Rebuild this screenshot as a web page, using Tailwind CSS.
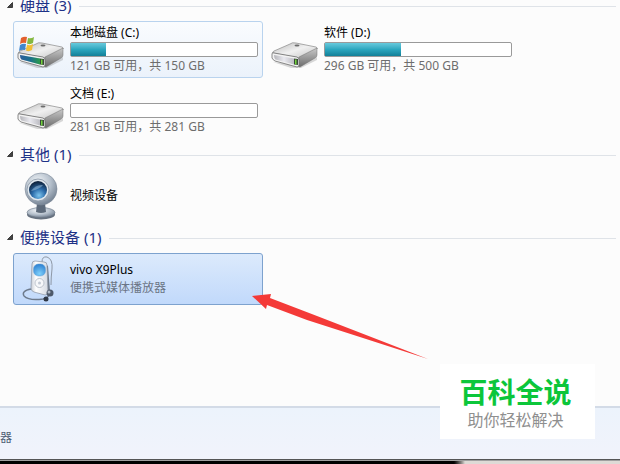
<!DOCTYPE html>
<html lang="zh-CN">
<head>
    <meta charset="UTF-8">
    <meta name="viewport" content="width=device-width, initial-scale=1.0">
    <script src="https://cdn.jsdelivr.net/npm/@tailwindcss/browser@4"></script>
    <title>计算机</title>
</head>
<body class="relative flex h-screen flex-col overflow-hidden bg-[#fcfcfc] font-['Noto_Sans','Noto_Sans_CJK_SC',sans-serif] text-[12px] leading-4 text-black">
    <!-- shared drawings -->
    <svg class="absolute size-0" aria-hidden="true">
        <defs>
            <linearGradient id="metalTop" x1="0" y1="0" x2="1" y2="1">
                <stop offset="0" stop-color="#b9b9b9"/>
                <stop offset=".5" stop-color="#f0f0f0"/>
                <stop offset="1" stop-color="#c4c4c4"/>
            </linearGradient>
            <linearGradient id="metalSide" x1="0" y1="0" x2="0" y2="1">
                <stop offset="0" stop-color="#c9c9c9"/>
                <stop offset="1" stop-color="#6c6c6c"/>
            </linearGradient>
            <linearGradient id="metalFront" x1="0" y1="0" x2="1" y2="0">
                <stop offset="0" stop-color="#b5b5ba"/>
                <stop offset=".5" stop-color="#e9e9ef"/>
                <stop offset="1" stop-color="#bcbcc2"/>
            </linearGradient>
            <linearGradient id="systemFront" x1="0" y1="0" x2="1" y2="0">
                <stop offset="0" stop-color="#2c5f9c"/>
                <stop offset=".5" stop-color="#1c6f8f"/>
                <stop offset="1" stop-color="#2b9a4e"/>
            </linearGradient>
            <radialGradient id="camBody" cx=".4" cy=".3" r=".75">
                <stop offset="0" stop-color="#f3f6f9"/>
                <stop offset=".55" stop-color="#b4bfcb"/>
                <stop offset="1" stop-color="#6d7b8c"/>
            </radialGradient>
            <radialGradient id="camLens" cx=".55" cy=".8" r=".75">
                <stop offset="0" stop-color="#7cc4ee"/>
                <stop offset=".5" stop-color="#2a6aa8"/>
                <stop offset="1" stop-color="#10243f"/>
            </radialGradient>
            <linearGradient id="playerBody" x1="0" y1="0" x2="1" y2="0">
                <stop offset="0" stop-color="#c9ced6"/>
                <stop offset=".3" stop-color="#ffffff"/>
                <stop offset="1" stop-color="#d5dae2"/>
            </linearGradient>
            <radialGradient id="playerScreen" cx=".5" cy=".8" r=".8">
                <stop offset="0" stop-color="#7fd0fb"/>
                <stop offset="1" stop-color="#2c7fd0"/>
            </radialGradient>
            <g id="driveShape">
                <path d="M2 24 26 32 46 22 V19 L28 27z" fill="#000" opacity=".15"/>
                <path d="M2 15 Q1 14 3 13 L19 6 Q21 4 25 5 L45 9 Q47 10 46 11 L28 20z" fill="url(#metalTop)" stroke="#8a8a8a" stroke-width=".7"/>
                <path d="M28 19 46 10 V17 Q46 19 44 20 L29 29 Q27 29 27 27z" fill="url(#metalSide)" stroke="#707070" stroke-width=".5"/>
                <path d="M1 16 Q1 14 3 15 L26 19 Q28 20 28 22 V27 Q28 29 26 29 L4 23 Q2 22 1 20z" fill="#f2f2f2" stroke="#6d6d6d" stroke-width=".8"/>
                <path d="M3 17 23 20.5 V26.5 L4.500 21.500 Q3 20 3 17z" fill="url(#metalFront)"/>
                <path d="M23 20.500 27 21 V27 L23 26.500z" fill="#3a4a3a"/>
                <path d="M24 21.500h1.500v5H24z" fill="#72d43c"/>
                <ellipse cx="26" cy="7.500" rx="2.500" ry="1" fill="#6c6c6c"/>
            </g>
        </defs>
    </svg>

    <main class="min-h-0 flex-1 overflow-hidden pr-1">
        <div class="-mt-[10px]">
            <section class="pt-1">
                <h2 class="flex h-6 items-center text-[15px] text-[#1e3287]">
                    <button type="button" class="flex items-center gap-[6px] pb-[2px] pl-[6px]">
                        <svg class="size-2" viewBox="0 0 8 8" aria-hidden="true"><path d="M6.500 1.500v5h-5z" fill="#444" stroke="#222" stroke-width=".8"/></svg>
                        <span>硬盘 (3)</span>
                    </button>
                    <span class="ml-2 h-px flex-1 bg-[#dfe3e8]"></span>
                </h2>
                <div class="mt-[3px] flex flex-wrap gap-1 pl-[13px]">
                    <button type="button" class="flex h-[57px] w-[250px] items-center gap-[5px] rounded-[3px] border border-[#b9d3ee] bg-linear-to-b from-[#fafcfe] to-[#ebf2fb] pr-1 pl-[3px] text-left">
                        <svg class="h-9 w-12 shrink-0" viewBox="0 0 48 36" aria-hidden="true">
                            <use href="#driveShape" y="6"/>
                            <path d="M3 23 23 26.500 V32.500 L4.500 27.500 Q3 26 3 23z" fill="url(#systemFront)"/>
                            <path d="M4 6 Q7 4 10 5 L9 11 Q6 10 3 12z" fill="#e2602e"/>
                            <path d="M11 6 Q14 7 17 5 L16 11 Q13 13 10 11.500z" fill="#84b840"/>
                            <path d="M3 13 Q6 11 9 12 L8 18 Q5 17 2 19z" fill="#3f86cf"/>
                            <path d="M10 12.500 Q13 14 16 12 L15 18 Q12 20 9 18.500z" fill="#f2bf35"/>
                        </svg>
                        <span class="flex min-w-0 flex-1 flex-col gap-px">
                            <span>本地磁盘 (C:)</span>
                            <span class="flex h-[15px] rounded-[2px] border border-[#9a9a9a] bg-white"><span class="bg-linear-to-b from-[#66cadd] via-[#2ba6be] via-50% to-[#128098]" style="width: 19%"></span></span>
                            <span class="text-[#6d6d6d]">121 GB 可用，共 150 GB</span>
                        </span>
                    </button>
                    <button type="button" class="flex h-[57px] w-[250px] items-center gap-[5px] rounded-[3px] border border-transparent pr-1 pl-[3px] text-left">
                        <svg class="h-9 w-12 shrink-0" viewBox="0 0 48 36" aria-hidden="true"><use href="#driveShape" y="6"/></svg>
                        <span class="flex min-w-0 flex-1 flex-col gap-px">
                            <span>软件 (D:)</span>
                            <span class="flex h-[15px] rounded-[2px] border border-[#9a9a9a] bg-white"><span class="bg-linear-to-b from-[#66cadd] via-[#2ba6be] via-50% to-[#128098]" style="width: 41%"></span></span>
                            <span class="text-[#6d6d6d]">296 GB 可用，共 500 GB</span>
                        </span>
                    </button>
                    <button type="button" class="flex h-[57px] w-[250px] items-center gap-[5px] rounded-[3px] border border-transparent pr-1 pl-[3px] text-left">
                        <svg class="h-9 w-12 shrink-0" viewBox="0 0 48 36" aria-hidden="true"><use href="#driveShape" y="6"/></svg>
                        <span class="flex min-w-0 flex-1 flex-col gap-px">
                            <span>文档 (E:)</span>
                            <span class="flex h-[15px] rounded-[2px] border border-[#9a9a9a] bg-white"></span>
                            <span class="text-[#6d6d6d]">281 GB 可用，共 281 GB</span>
                        </span>
                    </button>
                </div>
            </section>

            <section class="pt-1">
                <h2 class="flex h-6 items-center text-[15px] text-[#1e3287]">
                    <button type="button" class="flex items-center gap-[6px] pb-[2px] pl-[6px]">
                        <svg class="size-2" viewBox="0 0 8 8" aria-hidden="true"><path d="M6.500 1.500v5h-5z" fill="#444" stroke="#222" stroke-width=".8"/></svg>
                        <span>其他 (1)</span>
                    </button>
                    <span class="ml-2 h-px flex-1 bg-[#dfe3e8]"></span>
                </h2>
                <div class="mt-[3px] flex flex-wrap gap-1 pl-[13px]">
                    <button type="button" class="flex h-[52px] w-[250px] items-center gap-[5px] rounded-[3px] border border-transparent pr-1 pl-[3px] text-left">
                        <svg class="size-12 shrink-0" viewBox="0 0 48 48" aria-hidden="true">
                            <ellipse cx="24" cy="42.500" rx="14" ry="5" fill="#66717f"/>
                            <ellipse cx="24" cy="40.500" rx="14" ry="5" fill="url(#camBody)" stroke="#6f7b89" stroke-width=".6"/>
                            <path d="M20 31h8l1 9q-5 2-10 0z" fill="#5d6a7a"/>
                            <circle cx="24" cy="17" r="16" fill="url(#camBody)" stroke="#7d8a99" stroke-width=".6"/>
                            <circle cx="21" cy="18" r="11" fill="#dfe6ed" stroke="#8794a3" stroke-width=".8"/>
                            <circle cx="21" cy="18" r="9" fill="url(#camLens)"/>
                            <path d="M14 19 Q19 12 26 13 Q23 17 14 19z" fill="#c7e0f2" opacity=".4"/>
                        </svg>
                        <span>视频设备</span>
                    </button>
                </div>
            </section>

            <section class="pt-1">
                <h2 class="flex h-6 items-center text-[15px] text-[#1e3287]">
                    <button type="button" class="flex items-center gap-[6px] pb-[2px] pl-[6px]">
                        <svg class="size-2" viewBox="0 0 8 8" aria-hidden="true"><path d="M6.500 1.500v5h-5z" fill="#444" stroke="#222" stroke-width=".8"/></svg>
                        <span>便携设备 (1)</span>
                    </button>
                    <span class="ml-2 h-px flex-1 bg-[#dfe3e8]"></span>
                </h2>
                <div class="mt-[3px] flex flex-wrap gap-1 pl-[13px]">
                    <button type="button" class="flex h-[52px] w-[250px] items-center gap-[5px] rounded-[3px] border border-[#7da2ce] bg-linear-to-b from-[#dceafc] to-[#c1d9fb] pr-1 pl-[3px] text-left">
                        <svg class="size-12 shrink-0" viewBox="0 0 48 48" aria-hidden="true">
                            <path d="M25 7 Q25 1 30 2 Q36 4 35 14 Q34 22 34 30" fill="none" stroke="#8e98a6" stroke-width="1"/>
                            <path d="M14 34 Q4 36 7 41 Q12 46 26 44 Q31 43 32 40" fill="none" stroke="#6d7a8c" stroke-width="1.400"/>
                            <path d="M28 9 31 11 33 36 29 39z" fill="#6f7a89"/>
                            <path d="M15 9 Q15 6 18 6 L27 7 Q30 7 30 10 L31 37 Q31 40 28 40 L17 37 Q14 36 14 33z" fill="url(#playerBody)" stroke="#8a94a3" stroke-width=".7"/>
                            <rect x="16.500" y="9" width="12" height="12" rx="5" fill="url(#playerScreen)" stroke="#6aa5d6" stroke-width=".5"/>
                            <circle cx="22.500" cy="28" r="4.500" fill="#f7f8fa" stroke="#aeb6c2" stroke-width=".8"/>
                            <circle cx="22.500" cy="28" r="1.500" fill="#c3cad4"/>
                            <circle cx="33" cy="38" r="3.500" fill="#4e596a"/>
                            <circle cx="32" cy="37" r="1.500" fill="#aeb8c6"/>
                            <circle cx="29" cy="44" r="2.500" fill="#2e3745"/>
                        </svg>
                        <span class="flex flex-col gap-[2px]">
                            <span>vivo X9Plus</span>
                            <span class="text-[#6b7585]">便携式媒体播放器</span>
                        </span>
                    </button>
                </div>
            </section>
        </div>
    </main>

    <footer class="shrink-0">
        <div class="flex h-[53px] items-center border-t-2 border-[#d3dbe7] bg-linear-to-b from-[#ecf3fc] to-[#f1f3fb] pt-2 text-[#4f5d73]">器</div>
        <div class="h-[5px] border-t border-[#555] bg-linear-to-r from-black from-73% to-[#dedad6] to-75%">
            <div class="h-px bg-[#a0a0a0]"></div>
        </div>
    </footer>

    <!-- pointer -->
    <svg class="absolute top-[290px] left-[250px] h-[72px] w-[180px]" viewBox="0 0 180 72" aria-hidden="true">
        <path d="M2 6 21 4 20 8 67 26 178 69 113 48 57 30 17 15 16 19z" fill="#f43a38"/>
    </svg>

    <!-- watermark -->
    <div class="absolute right-[25px] bottom-[25px] flex h-[75px] w-[155px] flex-col items-center justify-center bg-white pr-1">
        <span class="text-[28px] leading-9 font-bold text-[#0cc63a]">百科全说</span>
        <span class="text-[16px] leading-5 text-[#8f8f8f]">助你轻松解决</span>
    </div>
</body>
</html>
